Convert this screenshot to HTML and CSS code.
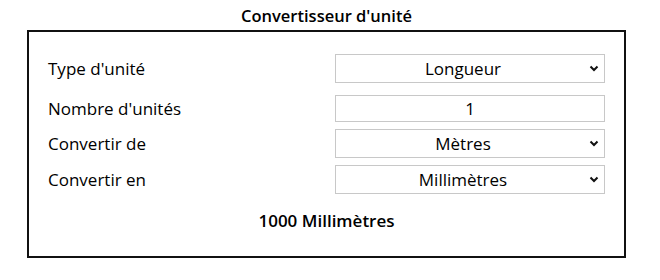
FILE: index.html
```html
<!DOCTYPE html>
<html lang="fr">
<head>
<meta charset="utf-8">
<title>Convertisseur d'unité</title>
<link rel="stylesheet" href="styles.css">
</head>
<body>
<div class="page">
  <h1 class="title">Convertisseur d'unité</h1>
  <div class="card">
    <div class="form">
      <div class="row row-first">
        <label class="label">Type d'unité</label>
        <div class="field">
          <select class="control"><option>Longueur</option></select>
          <svg class="chev" width="10" height="7" viewBox="0 0 10 7"><path d="M1.5 1.5 L5 5 L8.5 1.5" fill="none" stroke="#111" stroke-width="2"/></svg>
        </div>
      </div>
      <div class="row">
        <label class="label">Nombre d'unités</label>
        <div class="field">
          <input class="control input" type="text" value="1">
        </div>
      </div>
      <div class="row">
        <label class="label">Convertir de</label>
        <div class="field">
          <select class="control"><option>Mètres</option></select>
          <svg class="chev" width="10" height="7" viewBox="0 0 10 7"><path d="M1.5 1.5 L5 5 L8.5 1.5" fill="none" stroke="#111" stroke-width="2"/></svg>
        </div>
      </div>
      <div class="row">
        <label class="label">Convertir en</label>
        <div class="field">
          <select class="control"><option>Millimètres</option></select>
          <svg class="chev" width="10" height="7" viewBox="0 0 10 7"><path d="M1.5 1.5 L5 5 L8.5 1.5" fill="none" stroke="#111" stroke-width="2"/></svg>
        </div>
      </div>
    </div>
    <div class="result">1000 Millimètres</div>
  </div>
</div>
</body>
</html>
```
FILE: styles.css
```css
html, body {
  margin: 0;
  padding: 0;
  background: #fff;
}
body {
  font-family: "Open Sans", "Noto Sans", sans-serif;
  color: #000;
  font-size: 17px;
}
.page {
  width: 599px;
  margin-left: 27px;
}
.title {
  margin: 0;
  padding-top: 4px;
  height: 26px;
  line-height: 23px;
  font-size: 16.5px;
  font-weight: 600;
  text-align: center;
}
.card {
  border: 2px solid #111;
  padding: 22px 19px 24px 19px;
}
.form {
  display: flex;
  flex-direction: column;
  gap: 7px;
}
.row {
  display: flex;
  align-items: center;
  justify-content: space-between;
}
.row-first {
  margin-bottom: 5px;
}
.label {
  font-size: 17px;
  line-height: 23px;
}
.field {
  position: relative;
  width: 270px;
}
.control {
  display: block;
  box-sizing: border-box;
  width: 270px;
  height: 29px;
  margin: 0;
  border: 1px solid #c8c8c8;
  border-radius: 0;
  background: #fff;
  font-family: inherit;
  font-size: 17px;
  color: #000;
  text-align: center;
  text-align-last: center;
  appearance: none;
  -webkit-appearance: none;
  padding: 0 20px 0 6px;
  outline: none;
}
.input {
  height: 27px;
  padding: 0 6px;
}
.chev {
  position: absolute;
  right: 6px;
  top: 11px;
  pointer-events: none;
}
.result {
  margin-top: 16px;
  line-height: 22px;
  font-size: 17px;
  font-weight: 600;
  text-align: center;
}
```
